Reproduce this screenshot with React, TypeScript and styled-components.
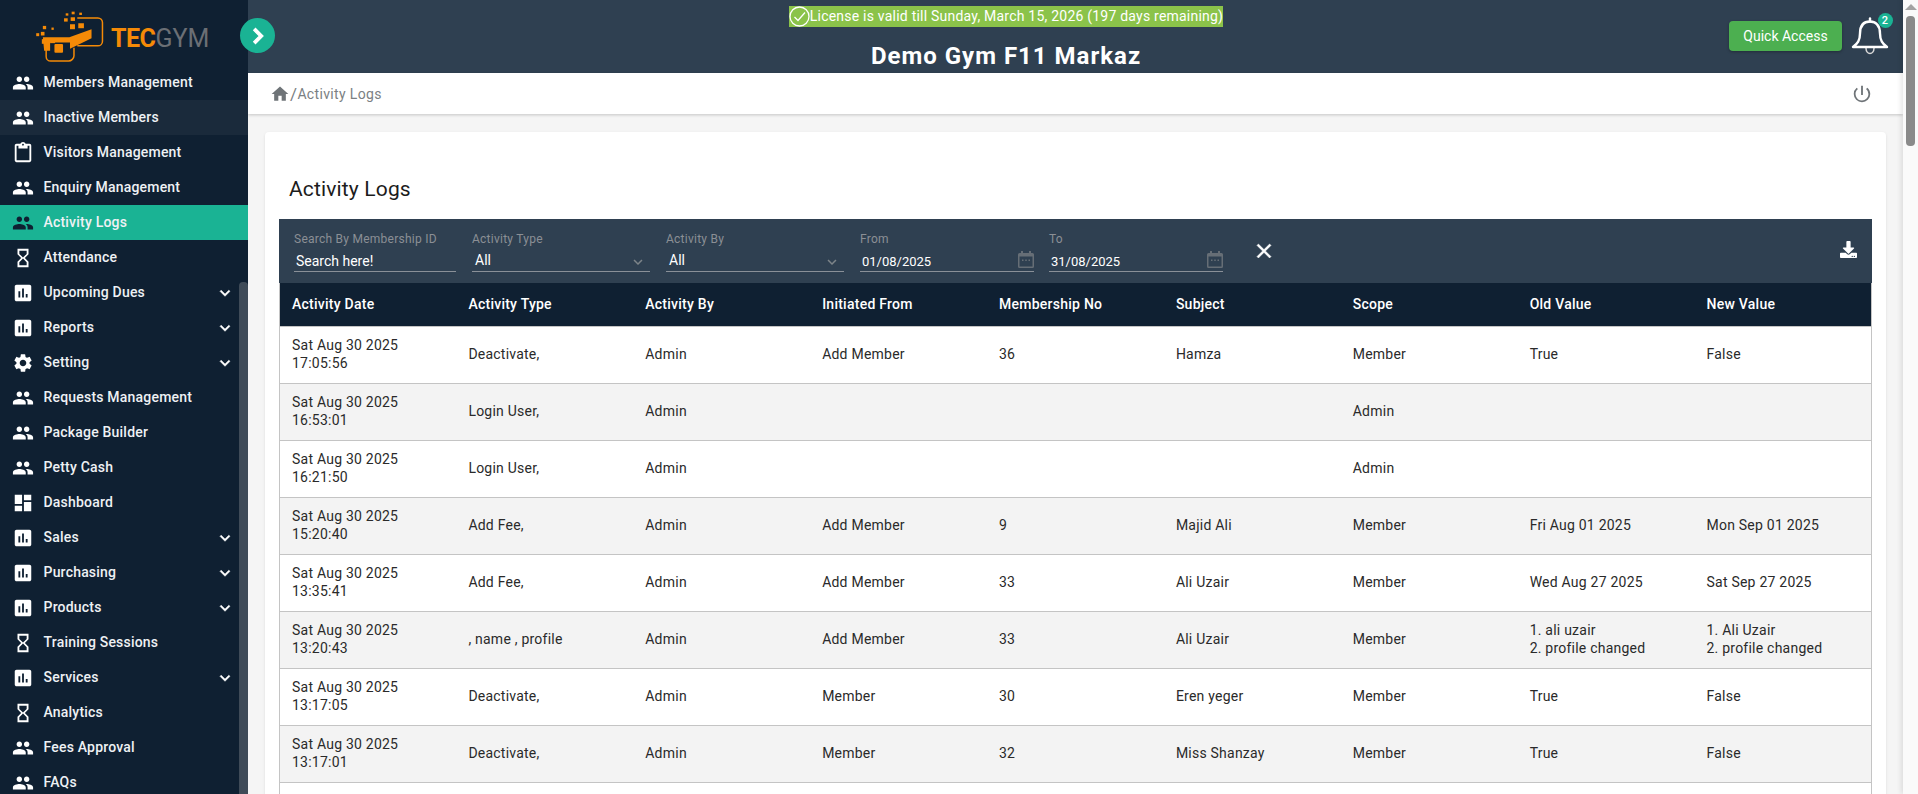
import React from "react";
import styled, { createGlobalStyle } from "styled-components";
import { MdPeople, MdAssessment, MdSettings, MdDashboard, MdHome, MdClose, MdKeyboardArrowDown, MdKeyboardArrowRight, MdHourglassEmpty, MdContentPaste, MdPowerSettingsNew } from "react-icons/md";
import { FaDownload } from "react-icons/fa";

const Global = createGlobalStyle`
  html, body { margin: 0; padding: 0; height: 100%; overflow: hidden; background: #f5f5f5; }
  body { font-family: Roboto, "Liberation Sans", sans-serif; }
  * { box-sizing: border-box; }
`;

const Shell = styled.div`display: flex; width: 1918px; height: 794px; overflow: hidden; position: relative;`;

const Sidebar = styled.aside`
  width: 248px; flex: none; height: 794px; background: #0f2032; overflow: hidden; position: relative;
`;
const LogoRow = styled.div`
  height: 65px; display: flex; align-items: flex-start; padding: 10px 0 0 35px; gap: 6px;
`;
const LogoText = styled.div`font: 700 25px/25px Roboto, sans-serif; color: #f58a07; margin-top: 16px; letter-spacing: -0.5px;`;
const LogoGrey = styled.span`color: #6b6f75; font-weight: 400; letter-spacing: 0;`;

const NavRow = styled.div<{ $active?: boolean; $hover?: boolean }>`
  height: 35px; display: flex; align-items: center; padding-left: 11px; padding-right: 13px;
  background: ${(p) => (p.$active ? "#1ab394" : p.$hover ? "#1a2a3b" : "transparent")};
  color: #eef1f4; font-size: 14px; font-weight: 500; letter-spacing: 0.2px;
`;
const NavIcon = styled.span<{ $dark?: boolean }>`
  width: 23px; height: 23px; display: flex; align-items: center; justify-content: center; margin-right: 9.5px; font-size: 22px;
  color: ${(p) => (p.$dark ? "#0f2032" : "#fff")};
`;
const NavLabel = styled.span`flex: 1; padding-bottom: 1px;`;
const Caret = styled.span`display: flex; font-size: 20px; color: #fff; svg path + path { stroke: currentColor; stroke-width: 0.6; }`;
const SideTrack = styled.div`position: absolute; right: 0; top: 282px; bottom: 0; width: 9px; background: #3f4b58; border-radius: 4px 4px 0 0;`;

const Toggle = styled.button`
  position: absolute; left: 240px; top: 18px; width: 35px; height: 35px; border-radius: 50%; border: 0; padding: 0;
  background: #1ab394; color: #fff; display: flex; align-items: center; justify-content: center; font-size: 30px; z-index: 3;
  svg path + path { stroke: currentColor; stroke-width: 1; }
`;

const Main = styled.main`flex: 1; min-width: 0; height: 794px; overflow: hidden; display: flex; flex-direction: column;`;

const TopBar = styled.header`
  height: 73px; flex: none; background: #2f4051; display: flex; position: relative; color: #fff; overflow: hidden;
`;
const TopCenter = styled.div`flex: 1; display: flex; flex-direction: column; align-items: center; padding-right: 139px;`;
const License = styled.div`
  margin-top: 6px; height: 21px; background: #8bc34a; color: #fff; font-size: 14px; display: flex; align-items: center; letter-spacing: 0.22px; line-height: 21px;
`;
const Title = styled.h1`margin: 15px 0 0; font-size: 24px; font-weight: 700; letter-spacing: 1px; line-height: 28px; color: #fff; white-space: nowrap;`;
const TopRight = styled.div`position: absolute; right: 0; top: 0; height: 73px; display: flex; align-items: flex-start;`;
const QuickBtn = styled.button`
  margin-top: 21px; width: 113px; height: 30px; background: #4caf50; border: 0; border-radius: 4px; color: #fff;
  font: 400 14px Roboto, sans-serif; box-shadow: 0 1px 3px rgba(0,0,0,.3); padding: 0;
`;
const BellWrap = styled.div`position: relative; width: 38px; height: 38px; margin-left: 9px; margin-right: 14px; margin-top: 17px;`;
const Badge = styled.span`
  position: absolute; left: 26.5px; top: -4px; width: 15px; height: 15px; border-radius: 50%; background: #1ab394; color: #fff;
  font-size: 11px; font-weight: 500; display: flex; align-items: center; justify-content: center;
`;

const Crumbs = styled.nav`
  height: 41px; flex: none; background: #fff; display: flex; align-items: center; padding: 0 30px 0 22px; color: #7b7f83; font-size: 14px;
  box-shadow: 0 1px 3px rgba(0,0,0,.2); position: relative; letter-spacing: 0.35px;
`;
const HomeIcon = styled.span`display: flex; font-size: 20px; color: #6f7478;`;
const Slash = styled.span`font-size: 17px;`;
const CrumbLabel = styled.span`flex: 1;`;
const PowerIcon = styled.span`display: flex; font-size: 22px; color: #6f7478;`;

const Content = styled.div`flex: 1; min-height: 0; padding: 18px 17px 0; background: #f5f5f5; overflow: hidden;`;
const Card = styled.section`
  background: #fff; border-radius: 4px; padding: 0 14px; box-shadow: 0 1px 3px rgba(0,0,0,.1); min-height: 800px;
`;
const CardTitle = styled.h2`
  margin: 0; padding: 45px 0 0 10px; height: 87px; font-size: 21px; font-weight: 400; line-height: 24px; color: #1c1c1c; letter-spacing: 0.15px;
`;

const FilterBar = styled.div`
  height: 64px; background: #2f4051; display: flex; align-items: flex-start; position: relative; padding: 0 15px; color: #fff;
`;
const Field = styled.div<{ $w: number; $mr: number }>`
  width: ${(p) => p.$w}px; margin-right: ${(p) => p.$mr}px; height: 64px; position: relative; padding-top: 13px;
`;
const FieldLabel = styled.div`font-size: 12px; line-height: 14px; color: #8b8f95; letter-spacing: 0.25px;`;
const FieldValue = styled.div`
  height: 22px; margin-top: 4px; border-bottom: 1px solid #8a9098; display: flex; align-items: center; justify-content: space-between;
  color: #fff; font-size: 14px; padding: 1px 0 0 2px; line-height: 20px;
`;
const DateValue = styled(FieldValue)`font-size: 13px; padding-top: 2px;`;
const SelectValue = styled(FieldValue)`padding: 1px 0 0 3px; align-items: flex-start; line-height: 18px;`;
const FieldIcon = styled.span`display: flex; margin-top: -5px;`;
const SelectIcon = styled.span`display: flex; color: #7d8489; font-size: 18px; margin-top: 2px; margin-right: 3px;`;
const ClearBtn = styled.span`display: flex; font-size: 24px; margin-top: 20px; margin-left: 14px; svg path + path { stroke: currentColor; stroke-width: 0.5; }`;
const DownloadBtn = styled.span`position: absolute; right: 15px; top: 22px; font-size: 17px; display: flex;`;

const Table = styled.table`
  width: 100%; border-collapse: collapse; table-layout: fixed; font-size: 14px; color: #2a2a2a; border-left: 1px solid #c4c4c4; border-right: 1px solid #c4c4c4;
`;
const Th = styled.th`
  height: 43px; background: #0f2032; color: #fff; font-size: 14px; font-weight: 500; text-align: left; padding: 0 12px; border-bottom: 1px solid #c4c4c4; letter-spacing: 0.25px;
`;
const Tr = styled.tr<{ $alt: boolean }>`background: ${(p) => (p.$alt ? "#f3f3f3" : "#fff")};`;
const Td = styled.td`
  height: 57px; padding: 0 12px 1px; border-bottom: 1px solid #c4c4c4; line-height: 18px; vertical-align: middle; letter-spacing: 0.23px;
`;

const Scrollbar = styled.div`
  width: 15px; flex: none; height: 794px; background: #fafafa; display: flex; flex-direction: column; align-items: center;
  box-shadow: -2px 0 5px rgba(0,0,0,.1); position: relative;
`;
const ScrollArrow = styled.div`
  margin-top: 4px; width: 0; height: 0; border-left: 6px solid transparent; border-right: 6px solid transparent; border-bottom: 6px solid #a3a3a3;
`;
const ScrollThumb = styled.div`margin-top: 6px; width: 9px; height: 130px; border-radius: 4px; background: #8a8a8a;`;

const Bell = () => (
  <svg width="38" height="38" viewBox="0 0 38 38" fill="none" stroke="#fff" strokeWidth="2.400" strokeLinejoin="round">
    <path d="M15 31c0 3.500 2 5.500 4 5.500s4-2 4-5.500" strokeWidth="1.500" stroke="#d8d8d8" />
    <path d="M19 4.500c-7 0-10 5-10 12 0 7-2.500 10-7 13.500h34c-4.500-3.500-7-6.500-7-13.500 0-7-3-12-10-12z" />
    <path d="M19 1.500v3" strokeLinecap="round" />
  </svg>
);

const CalendarIcon = () => (
  <svg width="16" height="17" viewBox="0 0 16 17" fill="none">
    <path d="M3 0h2v2h6V0h2v2h1.500A1.500 1.500 0 0 1 16 3.500v12a1.500 1.500 0 0 1-1.500 1.500h-13A1.500 1.500 0 0 1 0 15.500v-12A1.500 1.500 0 0 1 1.500 2H3z" fill="#666e76" />
    <rect x="1.500" y="5.500" width="13" height="10" fill="#2f4051" />
    <rect x="4" y="8.500" width="1.500" height="1.500" fill="#666e76" /><rect x="7.250" y="8.500" width="1.500" height="1.500" fill="#666e76" /><rect x="10.500" y="8.500" width="1.500" height="1.500" fill="#666e76" />
  </svg>
);

const Logo = () => (
  <svg width="70" height="53" viewBox="45 30 210 160">
    <g fill="none" stroke="#f58a07" strokeWidth="4.500">
      <path d="M172 54h62c8 0 14 6 14 14v56c0 8-6 14-14 14h-62" />
    </g>
    <path d="M68 112h80l67-24v27l-65 32V128H90v25H72z" fill="#f58a07" />
    <path d="M78 130v40c0 8 6 14 14 14h54c8 0 16-8 16-16v-24" fill="none" stroke="#f58a07" strokeWidth="4.500" />
    <g fill="#f58a07">
      <rect x="103" y="133" width="26" height="26" rx="3" />
      <rect x="65" y="118" width="15" height="14" /><rect x="90" y="115" width="15" height="15" />
      <rect x="48" y="100" width="9" height="9" /><rect x="62" y="96" width="11" height="11" /><rect x="68" y="78" width="10" height="10" /><rect x="94" y="83" width="7" height="7" />
      <rect x="150" y="73" width="15" height="15" /><rect x="175" y="70" width="17" height="15" /><rect x="152" y="52" width="13" height="11" /><rect x="132" y="55" width="11" height="10" />
      <rect x="155" y="35" width="9" height="8" /><rect x="137" y="40" width="8" height="7" /><rect x="178" y="38" width="8" height="7" />
    </g>
  </svg>
);

const P = <MdPeople />, R = <MdAssessment />, H = <MdHourglassEmpty />;
const nav: { label: string; icon: React.ReactNode; caret?: boolean; active?: boolean; hover?: boolean }[] = [
  { label: "Members Management", icon: P },
  { label: "Inactive Members", icon: P, hover: true },
  { label: "Visitors Management", icon: <MdContentPaste /> },
  { label: "Enquiry Management", icon: P },
  { label: "Activity Logs", icon: P, active: true },
  { label: "Attendance", icon: H },
  { label: "Upcoming Dues", icon: R, caret: true },
  { label: "Reports", icon: R, caret: true },
  { label: "Setting", icon: <MdSettings />, caret: true },
  { label: "Requests Management", icon: P },
  { label: "Package Builder", icon: P },
  { label: "Petty Cash", icon: P },
  { label: "Dashboard", icon: <MdDashboard /> },
  { label: "Sales", icon: R, caret: true },
  { label: "Purchasing", icon: R, caret: true },
  { label: "Products", icon: R, caret: true },
  { label: "Training Sessions", icon: H },
  { label: "Services", icon: R, caret: true },
  { label: "Analytics", icon: H },
  { label: "Fees Approval", icon: P },
  { label: "FAQs", icon: P },
];

const cols = ["Activity Date", "Activity Type", "Activity By", "Initiated From", "Membership No", "Subject", "Scope", "Old Value", "New Value"];
const rows: React.ReactNode[][] = [
  [<>Sat Aug 30 2025<br />17:05:56</>, "Deactivate,", "Admin", "Add Member", "36", "Hamza", "Member", "True", "False"],
  [<>Sat Aug 30 2025<br />16:53:01</>, "Login User,", "Admin", "", "", "", "Admin", "", ""],
  [<>Sat Aug 30 2025<br />16:21:50</>, "Login User,", "Admin", "", "", "", "Admin", "", ""],
  [<>Sat Aug 30 2025<br />15:20:40</>, "Add Fee,", "Admin", "Add Member", "9", "Majid Ali", "Member", "Fri Aug 01 2025", "Mon Sep 01 2025"],
  [<>Sat Aug 30 2025<br />13:35:41</>, "Add Fee,", "Admin", "Add Member", "33", "Ali Uzair", "Member", "Wed Aug 27 2025", "Sat Sep 27 2025"],
  [<>Sat Aug 30 2025<br />13:20:43</>, ", name , profile", "Admin", "Add Member", "33", "Ali Uzair", "Member", <>1. ali uzair<br />2. profile changed</>, <>1. Ali Uzair<br />2. profile changed</>],
  [<>Sat Aug 30 2025<br />13:17:05</>, "Deactivate,", "Admin", "Member", "30", "Eren yeger", "Member", "True", "False"],
  [<>Sat Aug 30 2025<br />13:17:01</>, "Deactivate,", "Admin", "Member", "32", "Miss Shanzay", "Member", "True", "False"],
  ["", "", "", "", "", "", "", "", ""],
];

export default function App() {
  return (
    <Shell>
      <Global />
      <Sidebar>
        <LogoRow>
          <Logo />
          <LogoText>TEC<LogoGrey>GYM</LogoGrey></LogoText>
        </LogoRow>
        {nav.map((n) => (
          <NavRow key={n.label} $active={n.active} $hover={n.hover}>
            <NavIcon $dark={n.active}>{n.icon}</NavIcon>
            <NavLabel>{n.label}</NavLabel>
            {n.caret && <Caret><MdKeyboardArrowDown /></Caret>}
          </NavRow>
        ))}
        <SideTrack />
      </Sidebar>
      <Toggle aria-label="Expand"><MdKeyboardArrowRight /></Toggle>
      <Main>
        <TopBar>
          <TopCenter>
            <License>
              <svg width="21" height="21" viewBox="0 0 21 21" fill="none" stroke="#fff" strokeWidth="1.300"><circle cx="10.500" cy="10.500" r="9.500" /><path d="M5.500 11l3.500 3.500 7-8" /></svg>
              License is valid till Sunday, March 15, 2026 (197 days remaining)
            </License>
            <Title>Demo Gym F11 Markaz</Title>
          </TopCenter>
          <TopRight>
            <QuickBtn>Quick Access</QuickBtn>
            <BellWrap>
              <Bell />
              <Badge>2</Badge>
            </BellWrap>
          </TopRight>
        </TopBar>
        <Crumbs>
          <HomeIcon><MdHome /></HomeIcon>
          <Slash>/</Slash>
          <CrumbLabel>Activity Logs</CrumbLabel>
          <PowerIcon><MdPowerSettingsNew /></PowerIcon>
        </Crumbs>
        <Content>
          <Card>
            <CardTitle>Activity Logs</CardTitle>
            <FilterBar>
              <Field $w={162} $mr={16}>
                <FieldLabel>Search By Membership ID</FieldLabel>
                <FieldValue>Search here!</FieldValue>
              </Field>
              <Field $w={178} $mr={16}>
                <FieldLabel>Activity Type</FieldLabel>
                <SelectValue>All<SelectIcon><MdKeyboardArrowDown /></SelectIcon></SelectValue>
              </Field>
              <Field $w={178} $mr={16}>
                <FieldLabel>Activity By</FieldLabel>
                <SelectValue>All<SelectIcon><MdKeyboardArrowDown /></SelectIcon></SelectValue>
              </Field>
              <Field $w={174} $mr={15}>
                <FieldLabel>From</FieldLabel>
                <DateValue>01/08/2025<FieldIcon><CalendarIcon /></FieldIcon></DateValue>
              </Field>
              <Field $w={174} $mr={15}>
                <FieldLabel>To</FieldLabel>
                <DateValue>31/08/2025<FieldIcon><CalendarIcon /></FieldIcon></DateValue>
              </Field>
              <ClearBtn><MdClose /></ClearBtn>
              <DownloadBtn><FaDownload /></DownloadBtn>
            </FilterBar>
            <Table>
              <thead>
                <tr>{cols.map((c) => <Th key={c}>{c}</Th>)}</tr>
              </thead>
              <tbody>
                {rows.map((r, i) => (
                  <Tr key={i} $alt={i % 2 === 1}>
                    {r.map((v, j) => <Td key={j}>{v}</Td>)}
                  </Tr>
                ))}
              </tbody>
            </Table>
          </Card>
        </Content>
      </Main>
      <Scrollbar>
        <ScrollArrow />
        <ScrollThumb />
      </Scrollbar>
    </Shell>
  );
}
